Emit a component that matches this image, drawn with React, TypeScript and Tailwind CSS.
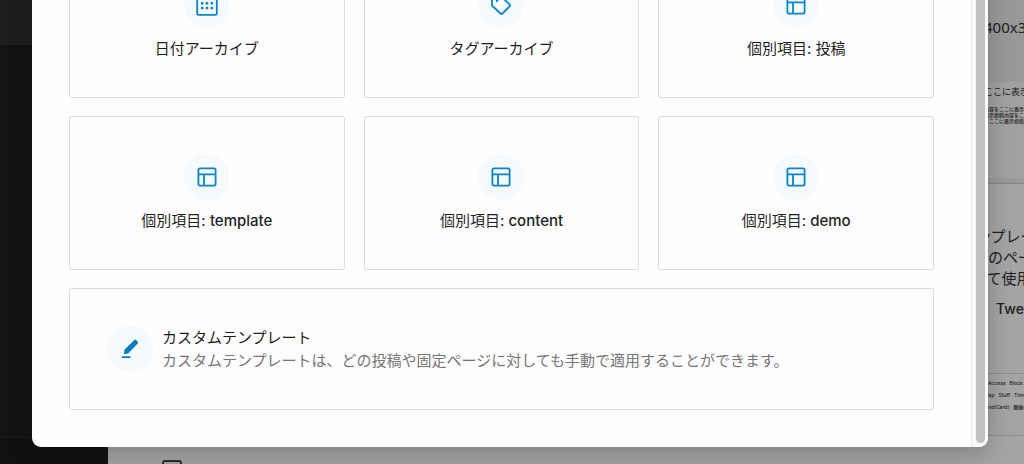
import type { ReactNode } from "react";

function LayoutIcon() {
  return (
    <svg viewBox="0 0 20 20" className="size-5" fill="none" stroke="#0a84c6" strokeWidth="1.8" aria-hidden="true">
      <rect x="1.4" y="1.4" width="17.2" height="17.2" rx="1.6" />
      <path d="M1.4 7.4h17.2M7 7.4v11.2" />
    </svg>
  );
}

function CalendarIcon() {
  return (
    <svg viewBox="0 0 22 22" className="size-[22px]" aria-hidden="true">
      <rect x="1.2" y="1.2" width="19.6" height="19.6" rx="1.6" fill="none" stroke="#0a84c6" strokeWidth="1.8" />
      <path d="M1.5 2h19v3h-19z" fill="#0a84c6" />
      <path
        d="M5 8h2.4v2.4H5zM9.8 8h2.4v2.4H9.8zM14.6 8H17v2.4h-2.4zM5 12.8h2.4v2.4H5zM9.8 12.8h2.4v2.4H9.8zM14.6 12.8H17v2.4h-2.4z"
        fill="#0a84c6"
      />
    </svg>
  );
}

function TagIcon() {
  return (
    <svg viewBox="0 0 22 22" className="size-[22px]" fill="none" stroke="#0a84c6" strokeWidth="1.8" strokeLinejoin="round" aria-hidden="true">
      <path d="M2 1.5h8.2l9.6 9.2q.7.7 0 1.4l-7.4 7.4q-.9.9-1.8 0L2 11.6z" />
      <circle cx="7" cy="6.8" r="1.2" fill="#0a84c6" stroke="none" />
    </svg>
  );
}

function PencilIcon() {
  return (
    <svg viewBox="0 0 20 20" className="size-5" fill="#0a7cbd" aria-hidden="true">
      <path d="M14.4 1q.8-.8 1.6 0l1.8 1.8q.8.8 0 1.6L8.4 14.2l-4.6 1 .8-4.6z" />
      <path d="M2 17.2h8.4v1.8H2z" />
    </svg>
  );
}

function IconCircle({ children }: { children: ReactNode }) {
  return (
    <span className="flex size-[46px] shrink-0 items-center justify-center rounded-full bg-[#f5fafe]">
      {children}
    </span>
  );
}

const templates: { label: string; slug?: string; icon: ReactNode }[] = [
  { label: "日付アーカイブ", icon: <CalendarIcon /> },
  { label: "タグアーカイブ", icon: <TagIcon /> },
  { label: "個別項目: 投稿", icon: <LayoutIcon /> },
  { label: "個別項目: ", slug: "template", icon: <LayoutIcon /> },
  { label: "個別項目: ", slug: "content", icon: <LayoutIcon /> },
  { label: "個別項目: ", slug: "demo", icon: <LayoutIcon /> },
];

function PageBehind() {
  return (
    <div className="flex h-full" aria-hidden="true">
      <div className="flex w-[108px] shrink-0 flex-col bg-[#131313]">
        <div className="h-[45px] bg-[#1e1e1e]" />
        <div className="flex-1" />
        <div className="h-[27px] border-t border-[#1b1b1b] bg-[#111111]" />
      </div>
      <div className="flex min-w-0 flex-1 items-end bg-[#a1a1a1] pl-[54px]">
        <div className="h-1 w-5 rounded-t-[3px] border-2 border-b-0 border-[#2c2c2c]" />
      </div>
      <div className="flex w-10 shrink-0 flex-col overflow-hidden whitespace-nowrap bg-[#a4a4a4] text-[#202020]">
        <div className="h-[82px] bg-[#999999] pt-[17px] font-['Noto_Sans'] text-[15px] leading-5">400x300</div>
        <div className="flex h-[102px] flex-col border-b border-[#858585] bg-[#a1a1a1]">
          <div className="pt-1 text-[9px] leading-3">ここに表示</div>
          <div className="flex-1 pt-2 text-[5px] leading-[6px] font-medium">
            <div>内容をここに表示投稿</div>
            <div>表示投稿内容をここに</div>
            <div>をここに表示投稿内容</div>
          </div>
          <div className="h-[5px] bg-[#999999]" />
        </div>
        <div className="h-[190px] border-b border-[#8c8c8c] pt-[42px] text-[15px] leading-[21px]">
          <div className="-ml-2">ンプレート</div>
          <div className="pl-1">のページ</div>
          <div className="-ml-3">して使用</div>
          <div className="pt-[10px] pl-3 text-sm leading-5 font-medium">Twenty</div>
        </div>
        <div className="h-[62px] border-b border-[#8c8c8c] pt-[3px] text-[5px] leading-3 font-medium">
          <div className="pl-1">Access&nbsp;&nbsp; Block</div>
          <div>Map&nbsp;&nbsp; Stuff&nbsp;&nbsp; Timeline</div>
          <div>Grid(Card)&nbsp;&nbsp; 画像検索</div>
        </div>
      </div>
    </div>
  );
}

export default function App() {
  return (
    <div className="relative h-screen overflow-hidden bg-[#9e9e9e] font-['Inter','Noto_Sans_CJK_JP',sans-serif]">
      <PageBehind />
      <div className="absolute inset-0 flex items-end pr-9 pb-[17px] pl-8">
        <div
          role="dialog"
          aria-label="カスタムテンプレート"
          className="flex min-w-0 flex-1 overflow-hidden rounded-[9px] bg-[#fefefe] shadow-[0_4px_24px_rgba(0,0,0,0.22)]"
        >
          <div className="grid min-w-0 flex-1 grid-cols-3 gap-x-[19px] gap-y-[18px] p-[37px] text-[15px] text-[#1e1e1e]">
            {templates.map((item, index) => (
              <button
                key={index}
                type="button"
                className="flex flex-col items-center gap-[10px] rounded-[2px] border border-[#dddddd] px-4 py-[37px] leading-[22px]"
              >
                <IconCircle>{item.icon}</IconCircle>
                <span>
                  {item.label}
                  {item.slug && <span className="font-medium">{item.slug}</span>}
                </span>
              </button>
            ))}
            <button
              type="button"
              className="col-span-3 flex items-center gap-[9px] rounded-[2px] border border-[#dddddd] p-[37px] text-left leading-[23px]"
            >
              <IconCircle>
                <PencilIcon />
              </IconCircle>
              <span className="flex flex-col">
                <span>カスタムテンプレート</span>
                <span className="text-[#757575]">
                  カスタムテンプレートは、どの投稿や固定ページに対しても手動で適用することができます。
                </span>
              </span>
            </button>
          </div>
          <div className="flex w-[17px] shrink-0 border-l border-[#ececec] bg-[#fafafa] pr-[3px] pb-1 pl-1">
            <div className="flex-1 rounded-full bg-[#c1c1c1]" />
          </div>
        </div>
      </div>
    </div>
  );
}
